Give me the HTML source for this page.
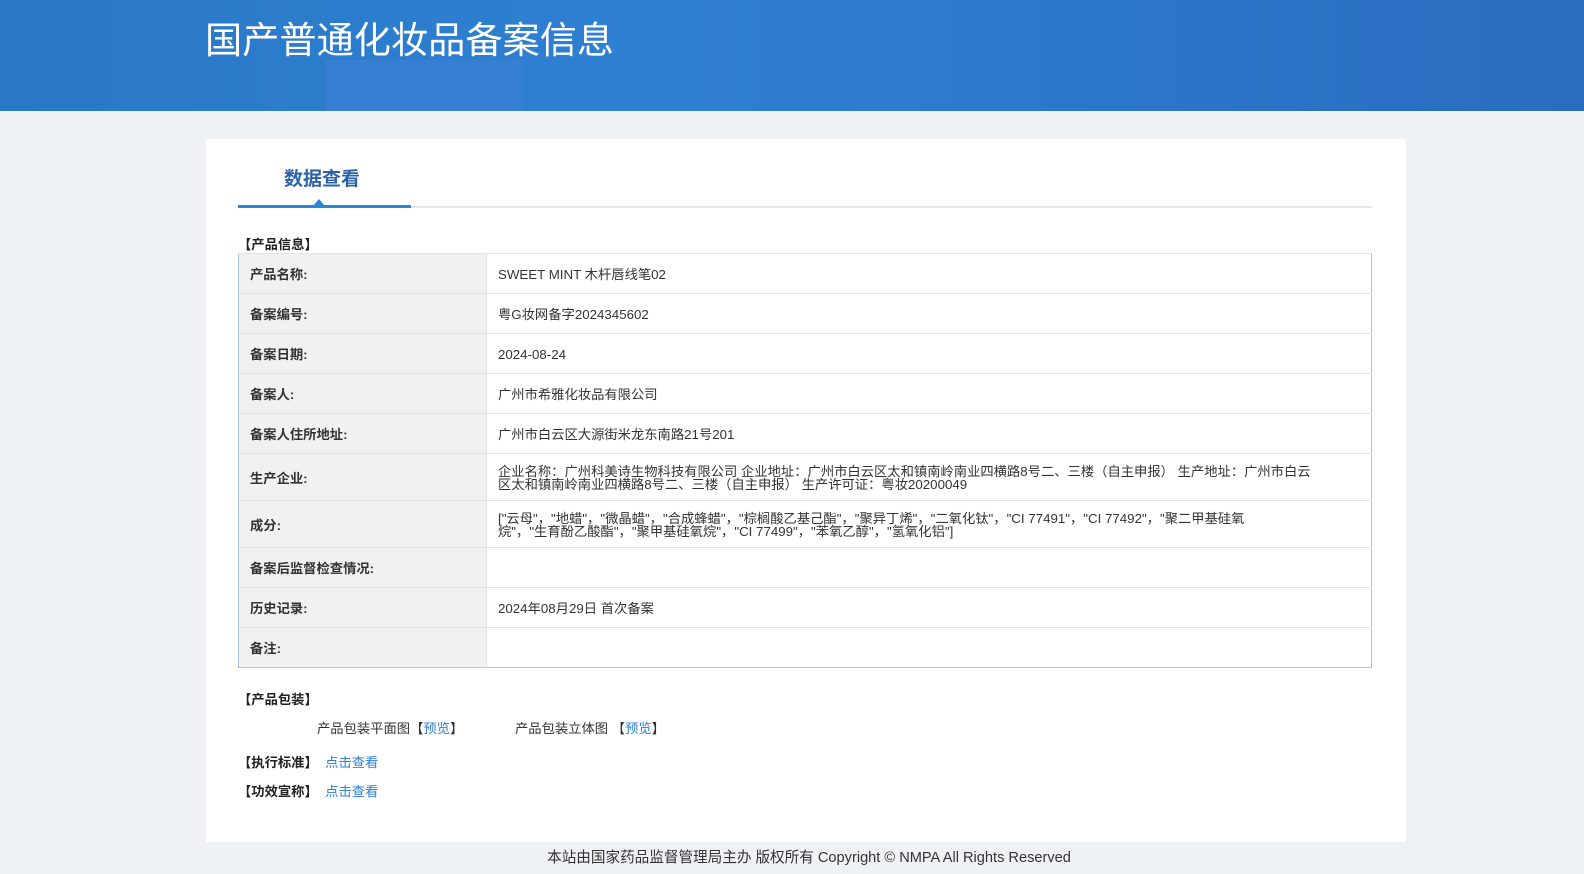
<!DOCTYPE html>
<html><head><meta charset="utf-8"><style>
*{margin:0;padding:0;box-sizing:border-box}
body{width:1584px;height:874px;background:#eff2f5;font-family:"Liberation Sans","Noto Sans CJK SC",sans-serif;color:#333;font-size:13px;position:relative;overflow:hidden}
.hd{height:111px;background:linear-gradient(90deg,#2978c6 0%,#2f80d3 40%,#2a6cc0 100%);position:relative;overflow:hidden}
.hd .b{position:absolute;left:326px;top:60px;width:196px;height:60px;background:#3b80d6;opacity:.7}
.hd h1{position:absolute;left:205px;top:10px;font-size:37.2px;font-weight:normal;color:#fff;font-family:"Noto Sans CJK SC",sans-serif}
.card{position:absolute;left:206px;top:139px;width:1200px;height:703px;background:#fff}
.tab{position:absolute;left:78px;top:25px;font-size:19px;font-weight:bold;color:#2a62a8}
.line{position:absolute;left:32px;top:67px;width:1134px;height:2px;background:#e6e6e6}
.line i{position:absolute;left:0;top:-1px;width:173px;height:3px;background:#2b86d6}
.tri{position:absolute;left:107px;top:60px;width:0;height:0;border-left:6px solid transparent;border-right:6px solid transparent;border-bottom:7px solid #2b86d6}
.sec{position:absolute;left:32px;font-weight:bold;font-size:13.3px;color:#222}
table{position:absolute;left:32px;top:114px;width:1134px;border-collapse:collapse;border:1px solid #a6c4ec}
td{border-top:1px solid #e3e3e3;height:40px;padding:2px 11px 0;vertical-align:middle;font-size:13.3px;line-height:13px}
td.l{width:248px;background:#f1f1f1;font-weight:bold;color:#333;border-right:1px solid #e3e3e3}
tr.t td{height:47px}
a{color:#2f7fd3;text-decoration:none}
.ft{position:absolute;top:846px;left:12px;width:1594px;text-align:center;font-size:14.6px;color:#333}
</style></head><body>
<div class="hd"><div class="b"></div><h1>国产普通化妆品备案信息</h1></div>
<div class="card">
<div class="tab">数据查看</div>
<div class="line"><i></i></div><div class="tri"></div>
<div class="sec" style="top:95px">【产品信息】</div>
<table>
<tr><td class="l">产品名称:</td><td>SWEET MINT 木杆唇线笔02</td></tr>
<tr><td class="l">备案编号:</td><td>粤G妆网备字2024345602</td></tr>
<tr><td class="l">备案日期:</td><td>2024-08-24</td></tr>
<tr><td class="l">备案人:</td><td>广州市希雅化妆品有限公司</td></tr>
<tr><td class="l">备案人住所地址:</td><td>广州市白云区大源街米龙东南路21号201</td></tr>
<tr class="t"><td class="l">生产企业:</td><td>企业名称：广州科美诗生物科技有限公司 企业地址：广州市白云区太和镇南岭南业四横路8号二、三楼（自主申报） 生产地址：广州市白云<br>区太和镇南岭南业四横路8号二、三楼（自主申报） 生产许可证：粤妆20200049</td></tr>
<tr class="t"><td class="l">成分:</td><td>["云母"，"地蜡"，"微晶蜡"，"合成蜂蜡"，"棕榈酸乙基己酯"，"聚异丁烯"，"二氧化钛"，"CI 77491"，"CI 77492"，"聚二甲基硅氧<br>烷"，"生育酚乙酸酯"，"聚甲基硅氧烷"，"CI 77499"，"苯氧乙醇"，"氢氧化铝"]</td></tr>
<tr><td class="l">备案后监督检查情况:</td><td></td></tr>
<tr><td class="l">历史记录:</td><td>2024年08月29日 首次备案</td></tr>
<tr><td class="l">备注:</td><td></td></tr>
</table>
<div class="sec" style="top:550px">【产品包装】</div>
<div style="position:absolute;left:111px;top:579px;font-size:13.3px">产品包装平面图【<a>预览</a>】</div>
<div style="position:absolute;left:309px;top:579px;font-size:13.3px">产品包装立体图 【<a>预览</a>】</div>
<div class="sec" style="top:613px">【执行标准】 &nbsp;<a style="font-weight:normal">点击查看</a></div>
<div class="sec" style="top:642px">【功效宣称】 &nbsp;<a style="font-weight:normal">点击查看</a></div>
</div>
<div class="ft">本站由国家药品监督管理局主办 版权所有 Copyright © NMPA All Rights Reserved</div>
</body></html>
